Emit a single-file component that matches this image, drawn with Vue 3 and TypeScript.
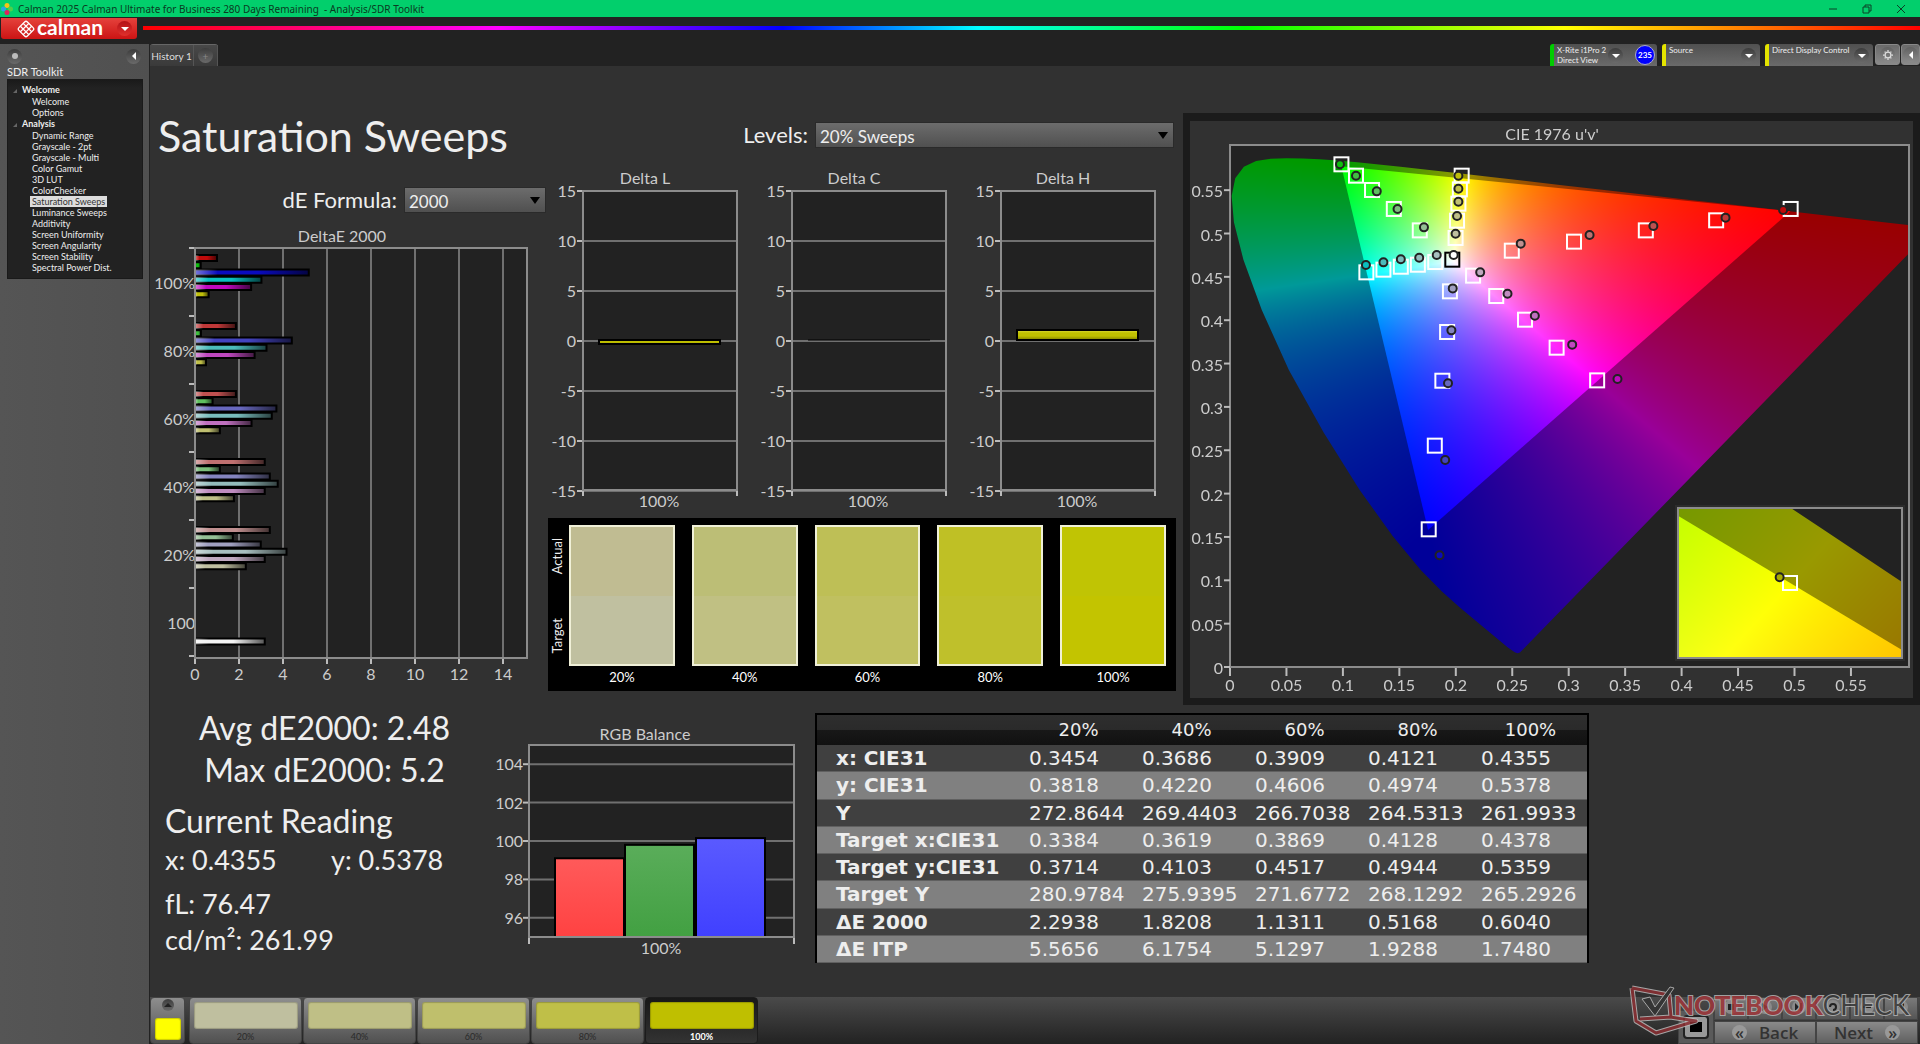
<script setup lang="ts">
import { onMounted, ref } from 'vue'

type Point = [number, number]

const navGroups = [
  { name: 'Welcome', items: ['Welcome', 'Options'] },
  {
    name: 'Analysis',
    items: [
      'Dynamic Range', 'Grayscale - 2pt', 'Grayscale - Multi', 'Color Gamut', '3D LUT', 'ColorChecker',
      'Saturation Sweeps', 'Luminance Sweeps', 'Additivity', 'Screen Uniformity', 'Screen Angularity',
      'Screen Stability', 'Spectral Power Dist.',
    ],
  },
]
const current = 'Saturation Sweeps'

// Delta E bars, one group per saturation level: red, green, blue, cyan, magenta, yellow
const deltaGroups = [
  { label: '100%', values: [1, 0.26, 5.17, 3.02, 2.55, 0.62], colors: ['#c00a0a', '#0fbf0f', '#0a0abf', '#0abfbf', '#bf0abf', '#bfbf0a'] },
  { label: '80%', values: [1.86, 0.27, 4.4, 3.25, 2.71, 0.5], colors: ['#bf3838', '#40bf40', '#4343bf', '#4bbcbc', '#bf48bf', '#bfbf48'] },
  { label: '60%', values: [1.86, 0.8, 3.7, 3.49, 2.57, 1.13], colors: ['#bf5050', '#5fbf5f', '#6868bf', '#78bcbc', '#bf70bf', '#bfbf70'] },
  { label: '40%', values: [3.17, 1.13, 3.4, 3.76, 3.17, 1.77], colors: ['#bf7070', '#7cbf7c', '#8484bf', '#94bcbc', '#bf8cbf', '#bfbf88'] },
  { label: '20%', values: [3.4, 1.72, 2.99, 4.16, 3.17, 2.31], colors: ['#bf8f8f', '#94bf94', '#a0a0c0', '#a8bfbf', '#bfa8bf', '#bfbfa0'] },
  { label: '100', values: [0, 0, 0, 0, 0, 0, 3.17], colors: ['', '', '', '', '', '', '#f4f4f4'] },
]

const smallCharts = [
  { title: 'Delta L', top: 172, height: 4 },
  { title: 'Delta C', top: 172, height: 0 },
  { title: 'Delta H', top: 162, height: 10 },
]
const smallTicks = [15, 10, 5, 0, -5, -10, -15]

const swatches = [
  { label: '20%', actual: '#c0bc92', target: '#c0c0a0' },
  { label: '40%', actual: '#bcbe76', target: '#c0c083' },
  { label: '60%', actual: '#bebf56', target: '#c0c060' },
  { label: '80%', actual: '#bfc025', target: '#bfc02b' },
  { label: '100%', actual: '#c0c404', target: '#c3c400' },
]
const thumbs = [
  { label: '20%', color: '#bfbf9f' },
  { label: '40%', color: '#bfbf86' },
  { label: '60%', color: '#bfbf6c' },
  { label: '80%', color: '#bfbf48' },
  { label: '100%', color: '#bfbf00' },
]

const rgbTicks = [104, 102, 100, 98, 96]
const rgbBars = [
  { x: 65, value: 99.1, fill: 'url(#barRed)' },
  { x: 135, value: 99.8, fill: 'url(#barGreen)' },
  { x: 206, value: 100.15, fill: 'url(#barBlue)' },
]
const rgbY = (v: number) => 212 - (v - 95) * 19.2

const columns = ['20%', '40%', '60%', '80%', '100%']
const tableRows = [
  { name: 'x: CIE31', cells: ['0.3454', '0.3686', '0.3909', '0.4121', '0.4355'] },
  { name: 'y: CIE31', cells: ['0.3818', '0.4220', '0.4606', '0.4974', '0.5378'] },
  { name: 'Y', cells: ['272.8644', '269.4403', '266.7038', '264.5313', '261.9933'] },
  { name: 'Target x:CIE31', cells: ['0.3384', '0.3619', '0.3869', '0.4128', '0.4378'] },
  { name: 'Target y:CIE31', cells: ['0.3714', '0.4103', '0.4517', '0.4944', '0.5359'] },
  { name: 'Target Y', cells: ['280.9784', '275.9395', '271.6772', '268.1292', '265.2926'] },
  { name: 'ΔE 2000', cells: ['2.2938', '1.8208', '1.1311', '0.5168', '0.6040'] },
  { name: 'ΔE ITP', cells: ['5.5656', '6.1754', '5.1297', '1.9288', '1.7480'] },
]

// u'v' chart geometry, in viewBox units
const plot = { x: 40, y: 24, w: 679, h: 522 }
const inset = { x: 488, y: 387, w: 224, h: 150 }
const px = (u: number) => plot.x + u * 1129
const py = (v: number) => plot.y + plot.h - v * 867
const ix = (x: number) => inset.x + inset.w / 2 + (x - 0.4378) * 4500
const iy = (y: number) => inset.y + inset.h / 2 - (y - 0.5359) * 3020

const axisTicks = ['0', '0.05', '0.1', '0.15', '0.2', '0.25', '0.3', '0.35', '0.4', '0.45', '0.5', '0.55']

const targets: Point[] = [
  [0.0987, 0.5798], [0.1116, 0.5667], [0.1258, 0.5502], [0.1451, 0.5283], [0.1681, 0.5036],
  [0.2052, 0.5667], [0.2036, 0.5509], [0.2023, 0.5344], [0.2011, 0.5148], [0.1998, 0.4948],
  [0.4966, 0.5283], [0.4306, 0.5152], [0.3683, 0.5036], [0.3047, 0.4906], [0.2496, 0.4802],
  [0.1208, 0.4552], [0.1359, 0.4583], [0.1513, 0.4617], [0.1664, 0.464], [0.1818, 0.4671],
  [0.3252, 0.3306], [0.2893, 0.3683], [0.2613, 0.4006], [0.2358, 0.4279], [0.2153, 0.4514],
  [0.176, 0.1588], [0.1814, 0.2553], [0.1881, 0.3302], [0.1923, 0.3864], [0.1948, 0.4333],
]
const measuredPoints: Point[] = [
  [0.0974, 0.5798], [0.1116, 0.5667], [0.13, 0.5486], [0.1484, 0.5283], [0.1718, 0.5071],
  [0.2023, 0.5667], [0.2023, 0.5517], [0.2023, 0.5367], [0.2011, 0.5202], [0.1998, 0.4998],
  [0.4899, 0.5271], [0.4389, 0.5183], [0.375, 0.5086], [0.3185, 0.4983], [0.2575, 0.4883],
  [0.1204, 0.4637], [0.1359, 0.4667], [0.1513, 0.4702], [0.1676, 0.4721], [0.1831, 0.4752],
  [0.3432, 0.3322], [0.3031, 0.3718], [0.27, 0.4052], [0.2458, 0.4306], [0.2216, 0.4552],
  [0.1856, 0.1288], [0.1906, 0.2388], [0.1931, 0.3272], [0.1961, 0.3883], [0.1973, 0.4367],
]
const hueOrder = [1, 5, 0, 3, 4, 2]
const measured = measuredPoints.map((p, i) => ({
  p,
  color: deltaGroups[i % 5].colors[hueOrder[Math.floor(i / 5)]],
}))

const locus: Point[] = [
  [0.1741, 0.005], [0.1726, 0.0048], [0.1714, 0.0051], [0.1689, 0.0069], [0.1644, 0.0109], [0.1566, 0.0177],
  [0.151, 0.0227], [0.144, 0.0297], [0.1355, 0.0399], [0.1241, 0.0578], [0.1096, 0.0868], [0.0913, 0.1327],
  [0.0687, 0.2007], [0.0454, 0.295], [0.0235, 0.4127], [0.0082, 0.5384], [0.0039, 0.6548], [0.0139, 0.7502],
  [0.0389, 0.812], [0.0743, 0.8338], [0.1142, 0.8262], [0.1547, 0.8059], [0.1929, 0.7816], [0.2296, 0.7543],
  [0.2658, 0.7243], [0.3016, 0.6923], [0.3373, 0.6589], [0.3731, 0.6245], [0.4087, 0.5896], [0.4441, 0.5547],
  [0.4788, 0.5202], [0.5125, 0.4866], [0.5448, 0.4544], [0.5752, 0.4242], [0.6029, 0.3965], [0.627, 0.3725],
  [0.6482, 0.3514], [0.6658, 0.334], [0.6915, 0.3083], [0.7079, 0.292], [0.719, 0.2809], [0.726, 0.274],
  [0.7347, 0.2653],
]
const gamut: Point[] = [[0.68, 0.32], [0.265, 0.69], [0.15, 0.06]]

const toUv = ([x, y]: Point): Point => {
  const d = -2 * x + 12 * y + 3
  return [(4 * x) / d, (9 * y) / d]
}
const toXy = (u: number, v: number): Point => {
  const d = 6 * u - 16 * v + 12
  return [(9 * u) / d, (4 * v) / d]
}

// Brightest linear RGB of a chromaticity, scaled by gain
function shade([x, y]: Point, gain: number): number[] {
  const X = x / y
  const Z = (1 - x - y) / y
  const rgb = [
    2.4935 * X - 0.9314 - 0.4027 * Z,
    -0.8295 * X + 1.7627 + 0.0236 * Z,
    0.0358 * X - 0.0762 + 0.9569 * Z,
  ].map((c) => Math.max(0, c))
  const top = Math.max(...rgb)
  return rgb.map((c) => (255 * gain * c) / top)
}

const canvas = ref<HTMLCanvasElement | null>(null)

function fillRegion(
  ctx: CanvasRenderingContext2D,
  box: { x: number; y: number; w: number; h: number },
  outline: Point[],
  toChroma: (x: number, y: number) => Point,
  gain: number,
) {
  const layer = document.createElement('canvas')
  layer.width = box.w
  layer.height = box.h
  const lctx = layer.getContext('2d')
  if (!lctx) return
  const img = lctx.createImageData(box.w, box.h)
  for (let j = 0; j < box.h; j++) {
    for (let i = 0; i < box.w; i++) {
      const c = shade(toChroma(box.x + i, box.y + j), gain)
      img.data.set([c[0], c[1], c[2], 255], (j * box.w + i) * 4)
    }
  }
  lctx.putImageData(img, 0, 0)
  ctx.save()
  ctx.beginPath()
  ctx.rect(box.x, box.y, box.w, box.h)
  ctx.clip()
  ctx.beginPath()
  outline.forEach(([x, y]) => ctx.lineTo(x, y))
  ctx.closePath()
  ctx.clip()
  ctx.drawImage(layer, box.x, box.y)
  ctx.restore()
}

onMounted(() => {
  const ctx = canvas.value?.getContext('2d')
  if (!ctx) return
  const uvOutline = (pts: Point[]) => pts.map(toUv).map(([u, v]): Point => [px(u), py(v)])
  const xyOutline = (pts: Point[]) => pts.map(([x, y]): Point => [ix(x), iy(y)])
  const mainChroma = (x: number, y: number) => toXy((x - plot.x) / 1129, Math.max(0.001, (plot.y + plot.h - y) / 867))
  const insetChroma = (x: number, y: number): Point => [
    0.4378 + (x - inset.x - inset.w / 2) / 4500,
    0.5359 - (y - inset.y - inset.h / 2) / 3020,
  ]
  ctx.fillStyle = '#222222'
  ctx.fillRect(plot.x, plot.y, plot.w, plot.h)
  fillRegion(ctx, plot, uvOutline(locus), mainChroma, 0.6)
  fillRegion(ctx, plot, uvOutline(gamut), mainChroma, 1)
  ctx.fillStyle = '#2c2c2c'
  ctx.fillRect(inset.x - 3, inset.y - 3, inset.w + 6, inset.h + 6)
  ctx.fillStyle = '#222222'
  ctx.fillRect(inset.x, inset.y, inset.w, inset.h)
  fillRegion(ctx, inset, xyOutline(locus), insetChroma, 0.6)
  fillRegion(ctx, inset, xyOutline(gamut), insetChroma, 1)
})

const transport = [
  'M-3 -3h6v6h-6z', 'M-3 -4l6 4l-6 4z', 'M-4 -4l4 4l-4 4zM1 -4h2v8h-2z',
  'M-4 0a4 4 0 1 1 4 4v-2a2 2 0 1 0 -2 -2z', 'M-4 -1h8v2h-8z', 'M3 -4l-6 4l6 4z',
]
</script>

<template>
  <div class="app">
    <header class="titlebar">
      <svg class="app-icon" viewBox="0 0 12 12" aria-hidden="true">
        <circle cx="6" cy="2.5" r="2.5" fill="#f5c518" />
        <circle cx="2.5" cy="6" r="2.5" fill="#2aa8e0" />
        <circle cx="9.5" cy="6" r="2.5" fill="#4fd04a" />
        <circle cx="6" cy="9.5" r="2.5" fill="#e0245e" />
      </svg>
      <span class="window-title">Calman 2025 Calman Ultimate for Business 280 Days Remaining &nbsp;- Analysis/SDR Toolkit</span>
      <div class="window-buttons">
        <button aria-label="Minimize"><svg viewBox="0 0 10 10"><path d="M1 5h8" /></svg></button>
        <button aria-label="Restore"><svg viewBox="0 0 10 10"><path d="M1 3h6v6h-6zM3 3v-2h6v6h-2" /></svg></button>
        <button aria-label="Close"><svg viewBox="0 0 10 10"><path d="M1 1l8 8M9 1l-8 8" /></svg></button>
      </div>
    </header>

    <div class="brandbar">
      <button class="brand">
        <svg class="brand-mark" viewBox="0 0 18 18" aria-hidden="true">
          <g transform="rotate(45 9 9)" fill="none" stroke="#fff" stroke-width="1.3">
            <rect x="3" y="3" width="12" height="12" rx="2" />
            <path d="M7 3v12M11 3v12M3 7h12M3 11h12" />
          </g>
        </svg>
        <span>calman</span>
        <i class="knob red"><b class="down"></b></i>
      </button>
      <div class="rainbow"></div>
    </div>

    <div class="body">
      <aside class="sidebar">
        <div class="side-top">
          <i class="knob"><b class="dot"></b></i>
          <button class="knob" aria-label="Collapse"><b class="left"></b></button>
        </div>
        <p class="side-title">SDR Toolkit</p>
        <nav class="tree">
          <template v-for="g in navGroups" :key="g.name">
            <strong>{{ g.name }}</strong>
            <ul>
              <li v-for="item in g.items" :key="item">
                <a href="#" :class="{ active: item === current }">{{ item }}</a>
              </li>
            </ul>
          </template>
        </nav>
      </aside>

      <main class="main">
        <div class="tabs">
          <div class="tab-group">
            <button class="tab">History 1</button>
            <button class="tab add" aria-label="Add history"><i class="knob">+</i></button>
          </div>
          <div class="devices">
            <button class="device meter">
              <span>X-Rite i1Pro 2<br />Direct View</span>
              <i class="knob"><b class="down"></b></i>
              <em>235</em>
            </button>
            <button class="device source"><span>Source</span><i class="knob"><b class="down"></b></i></button>
            <button class="device display"><span>Direct Display Control</span><i class="knob"><b class="down"></b></i></button>
            <button class="square" aria-label="Settings">
              <i class="knob light">
                <svg viewBox="0 0 12 12"><circle cx="6" cy="6" r="3.5" fill="none" stroke="#ddd" stroke-width="1.5" /><path d="M6 0v2M6 10v2M0 6h2M10 6h2M2 2l1 1M9 9l1 1M10 2l-1 1M2 10l1 -1" stroke="#ddd" stroke-width="1.5" /></svg>
              </i>
            </button>
            <button class="square" aria-label="Back"><i class="knob light"><b class="left"></b></i></button>
          </div>
        </div>

        <section class="top-row">
          <div class="col-left">
            <h1>Saturation Sweeps</h1>
            <div class="field formula">
              <label for="formula">dE Formula:</label>
              <div class="select-wrap"><select id="formula"><option>2000</option></select><b class="arrow"></b></div>
            </div>
            <svg class="chart" viewBox="0 0 398 464">
              <defs>
                <linearGradient id="sheen">
                  <stop offset="0" stop-color="#fff" stop-opacity="0.45" />
                  <stop offset="0.2" stop-color="#fff" stop-opacity="0" />
                  <stop offset="0.55" stop-color="#000" stop-opacity="0" />
                  <stop offset="1" stop-color="#000" stop-opacity="0.65" />
                </linearGradient>
              </defs>
              <text class="caption" x="192" y="16" text-anchor="middle">DeltaE 2000</text>
              <rect class="plot" x="45" y="22" width="332" height="410" />
              <g v-for="n in 8" :key="n">
                <path class="grid" :d="`M${45 + (n - 1) * 44} 22V432`" />
                <path class="tick" :d="`M${45 + (n - 1) * 44} 433v5`" />
                <text x="45" y="454" :dx="(n - 1) * 44" text-anchor="middle">{{ (n - 1) * 2 }}</text>
              </g>
              <path v-for="n in 7" :key="n" class="tick" :d="`M39 ${22 + (n - 1) * 68}h6`" />
              <g v-for="(g, gi) in deltaGroups" :key="g.label">
                <template v-for="(v, i) in g.values" :key="i">
                  <g v-if="v > 0">
                    <rect class="bar" x="45" :y="29 + gi * 68 + i * 7.25" :width="v * 22" height="6" :fill="g.colors[i]" />
                    <rect x="45" :y="29 + gi * 68 + i * 7.25" :width="v * 22" height="6" fill="url(#sheen)" />
                  </g>
                </template>
                <text x="45" :y="63 + gi * 68" text-anchor="end">{{ g.label }}</text>
              </g>
              <rect class="frame" x="45" y="22" width="332" height="410" />
            </svg>
          </div>

          <div class="col-mid">
            <div class="field levels">
              <label for="levels">Levels:</label>
              <div class="select-wrap wide"><select id="levels"><option>20% Sweeps</option></select><b class="arrow"></b></div>
            </div>
            <div class="small-charts">
              <svg v-for="c in smallCharts" :key="c.title" class="chart" viewBox="0 0 209 344">
                <defs>
                  <linearGradient id="yellowBar" x2="0" y2="1">
                    <stop offset="0" stop-color="#e0e040" />
                    <stop offset="0.3" stop-color="#c0c000" />
                    <stop offset="0.6" stop-color="#c0c000" />
                    <stop offset="1" stop-color="#808000" />
                  </linearGradient>
                </defs>
                <text class="caption" x="97" y="16" text-anchor="middle">{{ c.title }}</text>
                <rect class="plot" x="35" y="23" width="154" height="299" />
                <g v-for="(t, i) in smallTicks" :key="t">
                  <path class="grid" :d="`M35 ${23 + i * 50}H189`" />
                  <path class="tick" :d="`M29 ${23 + i * 50}h6`" />
                  <text x="28" :y="29 + i * 50" text-anchor="end">{{ t }}</text>
                </g>
                <rect class="frame" x="35" y="23" width="154" height="299" />
                <path class="tick" d="M35 323v5M189 323v5" />
                <rect v-if="c.height" class="bar" x="51" :y="c.top" width="121" :height="c.height" fill="url(#yellowBar)" />
                <path v-else d="M51 172H173" stroke="#000" />
                <text x="111" y="339" text-anchor="middle">100%</text>
              </svg>
            </div>
            <div class="swatches">
              <div class="side-labels"><span>Actual</span><span>Target</span></div>
              <figure v-for="s in swatches" :key="s.label">
                <div class="swatch">
                  <div :style="{ background: s.actual }"></div>
                  <div :style="{ background: s.target }"></div>
                </div>
                <figcaption>{{ s.label }}</figcaption>
              </figure>
            </div>
          </div>

          <div class="col-right">
            <div class="cie">
              <canvas ref="canvas" width="723" height="577"></canvas>
              <svg viewBox="0 0 723 577">
                <text class="caption" x="362" y="19" text-anchor="middle">CIE 1976 u'v'</text>
                <rect class="frame" :x="plot.x" :y="plot.y" :width="plot.w" :height="plot.h" />
                <g v-for="(t, i) in axisTicks" :key="t">
                  <path class="tick" :d="`M${px(i * 0.05)} 547v8`" />
                  <text :x="px(i * 0.05)" y="570" text-anchor="middle">{{ t }}</text>
                  <path class="tick" :d="`M34 ${py(i * 0.05)}h6`" />
                  <text x="33" :y="py(i * 0.05) + 7" text-anchor="end">{{ t }}</text>
                </g>
                <rect v-for="(p, i) in targets" :key="i" class="target" :x="px(p[0]) - 7" :y="py(p[1]) - 7" width="14" height="14" />
                <rect class="target white" :x="px(0.1969) - 7" :y="py(0.4698) - 7" width="14" height="14" />
                <circle v-for="(m, i) in measured" :key="i" class="measured" :cx="px(m.p[0])" :cy="py(m.p[1])" r="4" :fill="m.color" />
                <circle class="measured" :cx="px(0.1981)" :cy="py(0.4752)" r="4" fill="#fff" />
                <rect class="frame" :x="inset.x" :y="inset.y" :width="inset.w" :height="inset.h" />
                <rect class="target" :x="ix(0.4378) - 7" :y="iy(0.5359) - 7" width="14" height="14" />
                <circle class="measured" :cx="ix(0.4355)" :cy="iy(0.5378)" r="4" fill="#a8ac00" />
              </svg>
            </div>
          </div>
        </section>

        <section class="bottom-row">
          <div class="stats">
            <p class="big center">Avg dE2000: 2.48</p>
            <p class="big center">Max dE2000: 5.2</p>
            <p class="big reading">Current Reading</p>
            <p class="pair"><span>x: 0.4355</span><span>y: 0.5378</span></p>
            <p class="lum">fL: 76.47</p>
            <p>cd/m²: 261.99</p>
          </div>
          <svg class="chart" viewBox="0 0 320 240">
            <defs>
              <linearGradient id="barRed" x2="0" y2="1"><stop stop-color="#ff5a5a" /><stop offset="1" stop-color="#ff4242" /></linearGradient>
              <linearGradient id="barGreen" x2="0" y2="1"><stop stop-color="#5aad5a" /><stop offset="1" stop-color="#42a042" /></linearGradient>
              <linearGradient id="barBlue" x2="0" y2="1"><stop stop-color="#5a5aff" /><stop offset="1" stop-color="#4040ff" /></linearGradient>
            </defs>
            <text class="caption" x="155" y="15" text-anchor="middle">RGB Balance</text>
            <rect class="plot" x="39" y="20" width="265" height="192" />
            <g v-for="t in rgbTicks" :key="t">
              <path class="grid" :d="`M39 ${rgbY(t)}H304`" />
              <path class="tick" :d="`M33 ${rgbY(t)}h6`" />
              <text x="33" :y="rgbY(t) + 6" text-anchor="end">{{ t }}</text>
            </g>
            <rect v-for="b in rgbBars" :key="b.x" class="bar" :x="b.x" :y="rgbY(b.value)" width="69" :height="212 - rgbY(b.value)" :fill="b.fill" />
            <rect class="frame" x="39" y="20" width="265" height="192" />
            <path class="tick" d="M39 213v6M304 213v6" />
            <text x="171" y="229" text-anchor="middle">100%</text>
          </svg>
          <table>
            <thead>
              <tr><th></th><th v-for="c in columns" :key="c" scope="col">{{ c }}</th></tr>
            </thead>
            <tbody>
              <tr v-for="r in tableRows" :key="r.name">
                <th scope="row">{{ r.name }}</th>
                <td v-for="(c, i) in r.cells" :key="i">{{ c }}</td>
              </tr>
            </tbody>
          </table>
        </section>

        <footer class="footer">
          <button class="thumb current" aria-label="Current color"><i class="knob"><b class="up"></b></i><span class="chip"></span></button>
          <button v-for="t in thumbs" :key="t.label" class="thumb" :class="{ selected: t.label === '100%' }">
            <span class="chip" :style="{ background: t.color }"></span>
            {{ t.label }}
          </button>
          <div class="controls">
            <button class="stop" aria-label="Stop"><i></i></button>
            <div class="control-grid">
              <button v-for="(d, i) in transport" :key="i" class="mini" :aria-label="`Transport ${i + 1}`">
                <svg viewBox="-8 -8 16 16"><circle r="7" fill="#8a8a8a" /><path :d="d" fill="#222" /></svg>
              </button>
              <button class="step"><i class="knob pale">«</i>Back</button>
              <button class="step">Next<i class="knob pale">»</i></button>
            </div>
          </div>
          <svg class="watermark" viewBox="0 0 290 56" aria-label="Notebookcheck">
            <g fill="none" stroke-linejoin="round">
              <path d="M4 5L41 12L43 34L12 36M4 5L8 38L28 50L68 38L42 34" stroke="#bbb" stroke-width="5" />
              <path d="M4 5L41 12L43 34L12 36M4 5L8 38L28 50L68 38L42 34" stroke="#8c2f33" stroke-width="3" />
              <path d="M14 16L22 14L27 24L42 4L46 5L27 33z" fill="#333" stroke="#bbb" stroke-width="1" />
            </g>
            <text x="46" y="32"><tspan class="wm-red">NOTEBOOK</tspan><tspan class="wm-dark">CHECK</tspan></text>
          </svg>
        </footer>
      </main>
    </div>
  </div>
</template>

<style>
body {
  margin: 0;
  background: #313131;
}
</style>

<style scoped>
.app {
  display: flex;
  flex-direction: column;
  min-height: 100vh;
  overflow: hidden;
  color: #eee;
  background: #222;
  font-family: Lato, "Liberation Sans", sans-serif;
}
* { box-sizing: border-box; }
button { border: 0; padding: 0; font-family: inherit; color: inherit; background: none; }
p, h1, ul, figure { margin: 0; padding: 0; }

.titlebar { display: flex; align-items: center; height: 17px; padding-left: 1px; background: #02cf6c; color: #0a3a22; }
.app-icon { width: 12px; height: 12px; }
.window-title { margin-left: 5px; font: 10px "Noto Sans", sans-serif; white-space: nowrap; }
.window-buttons { display: flex; gap: 24px; margin-left: auto; padding-right: 14px; }
.window-buttons button { width: 10px; height: 17px; }
.window-buttons svg { width: 10px; height: 10px; fill: none; stroke: #0a4026; }

.brandbar { display: flex; height: 27px; padding: 1px 0 0 1px; background: #222; }
.brand {
  display: flex; align-items: center; width: 136px; height: 21px; padding: 0 5px 0 16px;
  border-radius: 0 0 3px 3px; background: linear-gradient(#e5423c, #cc1414); color: #fff;
  font-size: 21px; line-height: 18px; font-weight: 700;
}
.brand-mark { width: 18px; height: 18px; }
.brand span { margin: -3px 0 0 2px; }
.brand .knob { margin-left: auto; }
.rainbow {
  flex: 1; height: 4px; margin: 8px 0 0 6px;
  background: linear-gradient(90deg, #f00, #f0f 20%, #00f 36%, #0ff 47%, #0f0 62%, #ff0 80%, #f00);
}

.knob {
  display: flex; align-items: center; justify-content: center; flex: none; width: 15px; height: 15px;
  border-radius: 50%; background: linear-gradient(#3c3c3c, #6a6a6a); font-style: normal;
}
.knob.red { background: linear-gradient(#b31217, #e0302c); }
.knob.light { background: linear-gradient(#606060, #8a8a8a); }
.knob.light svg { width: 10px; height: 10px; }
.knob b { width: 0; height: 0; border: 4px solid transparent; }
.knob .down { border-top-color: #fff; border-bottom: 0; }
.knob .up { border-bottom-color: #222; border-top: 0; }
.knob .left { border-right-color: #fff; border-left: 0; }
.knob .dot { width: 6px; height: 6px; border: 0; border-radius: 50%; background: #bbb; }

.body { display: flex; flex: 1; }
.sidebar { width: 150px; padding: 3px 7px 0; border-right: 1px solid #222; background: linear-gradient(90deg, #555, #505050); }
.side-top { display: flex; justify-content: space-between; height: 18px; align-items: center; padding-right: 1px; }
.side-title { height: 14px; font-size: 11px; line-height: 14px; }
.tree { width: 136px; padding: 4px 0 5px 14px; border: 1px solid #1a1a1a; background: linear-gradient(#1a1a1a, #222 8px); font-size: 9px; }
.tree strong { display: block; position: relative; line-height: 12px; }
.tree strong::before {
  content: ""; position: absolute; left: -9px; top: 5px; border: 2px solid transparent;
  border-right-color: #666; border-bottom-color: #666;
}
.tree ul { list-style: none; padding-left: 8px; }
.tree li { height: 11px; line-height: 11px; }
.tree a { display: inline-block; padding: 0 2px; color: #eee; text-decoration: none; white-space: nowrap; }
.tree a.active { background: #ddd; color: #333; }

.main { display: flex; flex: 1; flex-direction: column; min-width: 0; background: #313131; }
.tabs { display: flex; justify-content: space-between; height: 22px; background: #222; }
.tab-group { display: flex; border-top: 1px solid #666; border-radius: 3px; }
.tab { width: 44px; border-right: 1px solid #555; background: linear-gradient(#484848, #3a3a3a); font-size: 10px; color: #ddd; white-space: nowrap; }
.tab.add { width: 24px; padding: 0 4px; color: #888; }
.devices { display: flex; }
.device {
  display: flex; align-items: flex-start; margin-right: 5px; padding-left: 3px; border-left: 4px solid #e4e400;
  border-radius: 3px 3px 0 0; background: linear-gradient(#505050, #6a6a6a); font-size: 8px; line-height: 10px;
  text-align: left; white-space: nowrap;
}
.device span { flex: 1; padding-top: 1px; }
.device .knob { margin: 4px 4px 0 0; }
.device.meter { width: 107px; border-left-color: #0c0; }
.device.meter .knob { margin-right: 5px; }
.device.source { width: 98px; }
.device.display { width: 108px; margin-right: 2px; }
.device em {
  flex: none; width: 20px; height: 20px; margin: 1px 2px 0 7px; border: 1px solid #aac; border-radius: 50%; background: #00f;
  font-size: 8px; line-height: 18px; font-style: normal; font-weight: 700; text-align: center; color: #fff;
}
.square { display: flex; align-items: center; justify-content: center; width: 25px; height: 21px; margin-right: 1px; border: 1px solid #888; border-radius: 3px; background: linear-gradient(#6a6a6a, #8a8a8a); }
.square:last-child { width: 19px; margin-right: 0; }

.top-row { display: grid; grid-template-columns: 398fr 632fr 740fr; }
.chart { display: block; width: 100%; }
svg text { fill: #ccc; font-size: 16px; }
.plot { fill: #222; }
.frame { fill: none; stroke: #8c8c8c; stroke-width: 2; }
.grid { stroke: #707070; stroke-width: 2; }
.tick { stroke: #bbb; stroke-width: 2; }
.bar { stroke: #000; stroke-width: 2; }

.col-left h1 { margin-top: 42px; padding-left: 8px; font-size: 43px; line-height: 56px; font-weight: 400; white-space: nowrap; }
.field { display: flex; justify-content: flex-end; align-items: center; gap: 7px; }
.field label { font-size: 22px; line-height: 26px; }
.formula { margin: 23px 2px 13px 0; }
.select-wrap { position: relative; width: 142px; height: 26px; }
.select-wrap.wide { width: 359px; }
.select-wrap select {
  appearance: none; width: 100%; height: 100%; padding: 3px 4px 0; border: 1px solid #2a2a2a; border-radius: 0;
  background: linear-gradient(#6c6c6c, #505050); color: #eee; font: 17px Lato, sans-serif;
}
.arrow { position: absolute; right: 6px; top: 10px; border: 5px solid transparent; border-top: 7px solid #000; border-bottom: 0; }

.levels { margin: 56px 6px 20px 0; }
.small-charts { display: flex; margin-right: 5px; }
.small-charts .chart { flex: 1; min-width: 0; }
.swatches { display: flex; gap: 17px; height: 173px; margin: 6px 4px 0 0; padding: 7px 10px 0 0; background: #000; }
.side-labels { display: flex; flex-direction: column; justify-content: space-between; width: 4px; height: 141px; padding: 13px 0 13px 2px; }
.side-labels span { width: 15px; writing-mode: vertical-rl; transform: rotate(180deg); font-size: 13px; line-height: 15px; color: #eee; text-align: center; }
.swatches figure { flex: 1; text-align: center; }
.swatch { display: grid; grid-template-rows: 1fr 1fr; height: 141px; border: 2px solid #f0f0d8; }
.swatches figcaption { font-size: 13px; line-height: 22px; color: #fff; }

.col-right { padding: 47px 0 0 3px; }
.cie { display: grid; border: 7px solid #1b1b1b; border-top-width: 8px; background: #313131; }
.cie canvas, .cie svg { grid-area: 1 / 1; display: block; width: 100%; }
.target { fill: none; stroke: #fff; stroke-width: 2; }
.target.white { stroke: #000; }
.measured { stroke: #222; stroke-width: 2; }

.bottom-row { display: grid; grid-template-columns: 340fr 320fr 5fr 774fr 331fr; align-items: start; }
.bottom-row > .chart { margin-top: 20px; }
.stats { padding: 2px 0 0 15px; font-size: 27px; line-height: 36px; white-space: nowrap; }
.stats .big { font-size: 32px; line-height: 42px; }
.stats .center { padding-right: 6px; text-align: center; }
.stats .reading { margin-top: 9px; }
.pair span { display: inline-block; width: 166px; }
.pair span + span { width: 120px; }
.stats .lum { margin-top: 8px; }

table {
  grid-column: 4; width: 100%; height: 250px; margin-top: 8px; border: 2px solid #000; border-bottom: 0;
  border-collapse: separate; border-spacing: 0; table-layout: fixed; font: 20px "DejaVu Sans", sans-serif;
}
th, td { padding: 0; text-align: left; white-space: nowrap; }
td { padding-left: 7px; }
thead tr { height: 30px; background: linear-gradient(#2e2e2e, #2a2a2a 50%, #181818 50%, #111); }
thead th { font-size: 18px; line-height: 20px; font-weight: 400; text-align: center; }
thead th:first-child { width: 205px; }
tbody tr { background: #404040; }
tbody tr:nth-child(even) { background: #808080; }
tbody th, tbody td { border-bottom: 1px solid #606060; line-height: 20px; }
tbody th { padding-left: 19px; font-weight: 700; }

.footer {
  display: flex; position: relative; height: 47px; margin-top: auto;
  background: linear-gradient(#4a4a4a, #222);
}
.thumb {
  display: flex; flex-direction: column; align-items: center; justify-content: flex-start; width: 113px; height: 47px; margin-right: 1px; padding: 4px 4px 0;
  border-radius: 4px; background: linear-gradient(#8e8e8e, #505050); border: 1px solid #444; font-size: 9px; line-height: 15px; color: #2a2a2a;
}
.thumb .chip { flex: none; width: 104px; height: 27px; border-radius: 3px; box-shadow: inset 0 0 1px 1px #0003; }
.thumb.current { width: 35px; margin-right: 4px; padding-top: 0; }
.thumb.current .knob { width: 12px; height: 12px; margin: 1px 0 7px; }
.thumb.current .chip { width: 26px; height: 22px; background: #ff0; }
.thumb.selected { border-color: #1c1c1c; background: linear-gradient(#181818, #333); color: #fff; font-weight: 700; }

.controls { display: flex; align-items: flex-end; margin-left: auto; padding-right: 2px; }
.stop { display: flex; align-items: center; justify-content: center; width: 36px; height: 34px; background: #5a5a5a; border: 1px solid #444; }
.stop i { width: 22px; height: 20px; border: 5px solid #999; outline: 2px solid #222; border-radius: 2px; background: #000; }
.control-grid { display: grid; grid-template-columns: repeat(6, 34px); grid-template-rows: 23px 23px; height: 47px; gap: 1px 0; }
.mini, .step { border: 1px solid #444; background: linear-gradient(#7a7a7a, #555); }
.mini svg { width: 16px; height: 16px; }
.step { grid-column: span 3; display: flex; align-items: center; justify-content: center; gap: 12px; font: 600 17px "Open Sans", sans-serif; color: #333; background: linear-gradient(#8a8a8a, #606060); }
.knob.pale { background: #999; font-size: 16px; }
.watermark { position: absolute; right: 2px; bottom: 5px; width: 290px; height: 56px; opacity: 0.85; }
.watermark text { font: 900 26px Lato, sans-serif; stroke: #b4b4b4; stroke-width: 2; paint-order: stroke; }
.watermark .wm-red { fill: #a0363a; }
.watermark .wm-dark { fill: #3a3a3a; font-weight: 400; }
</style>
